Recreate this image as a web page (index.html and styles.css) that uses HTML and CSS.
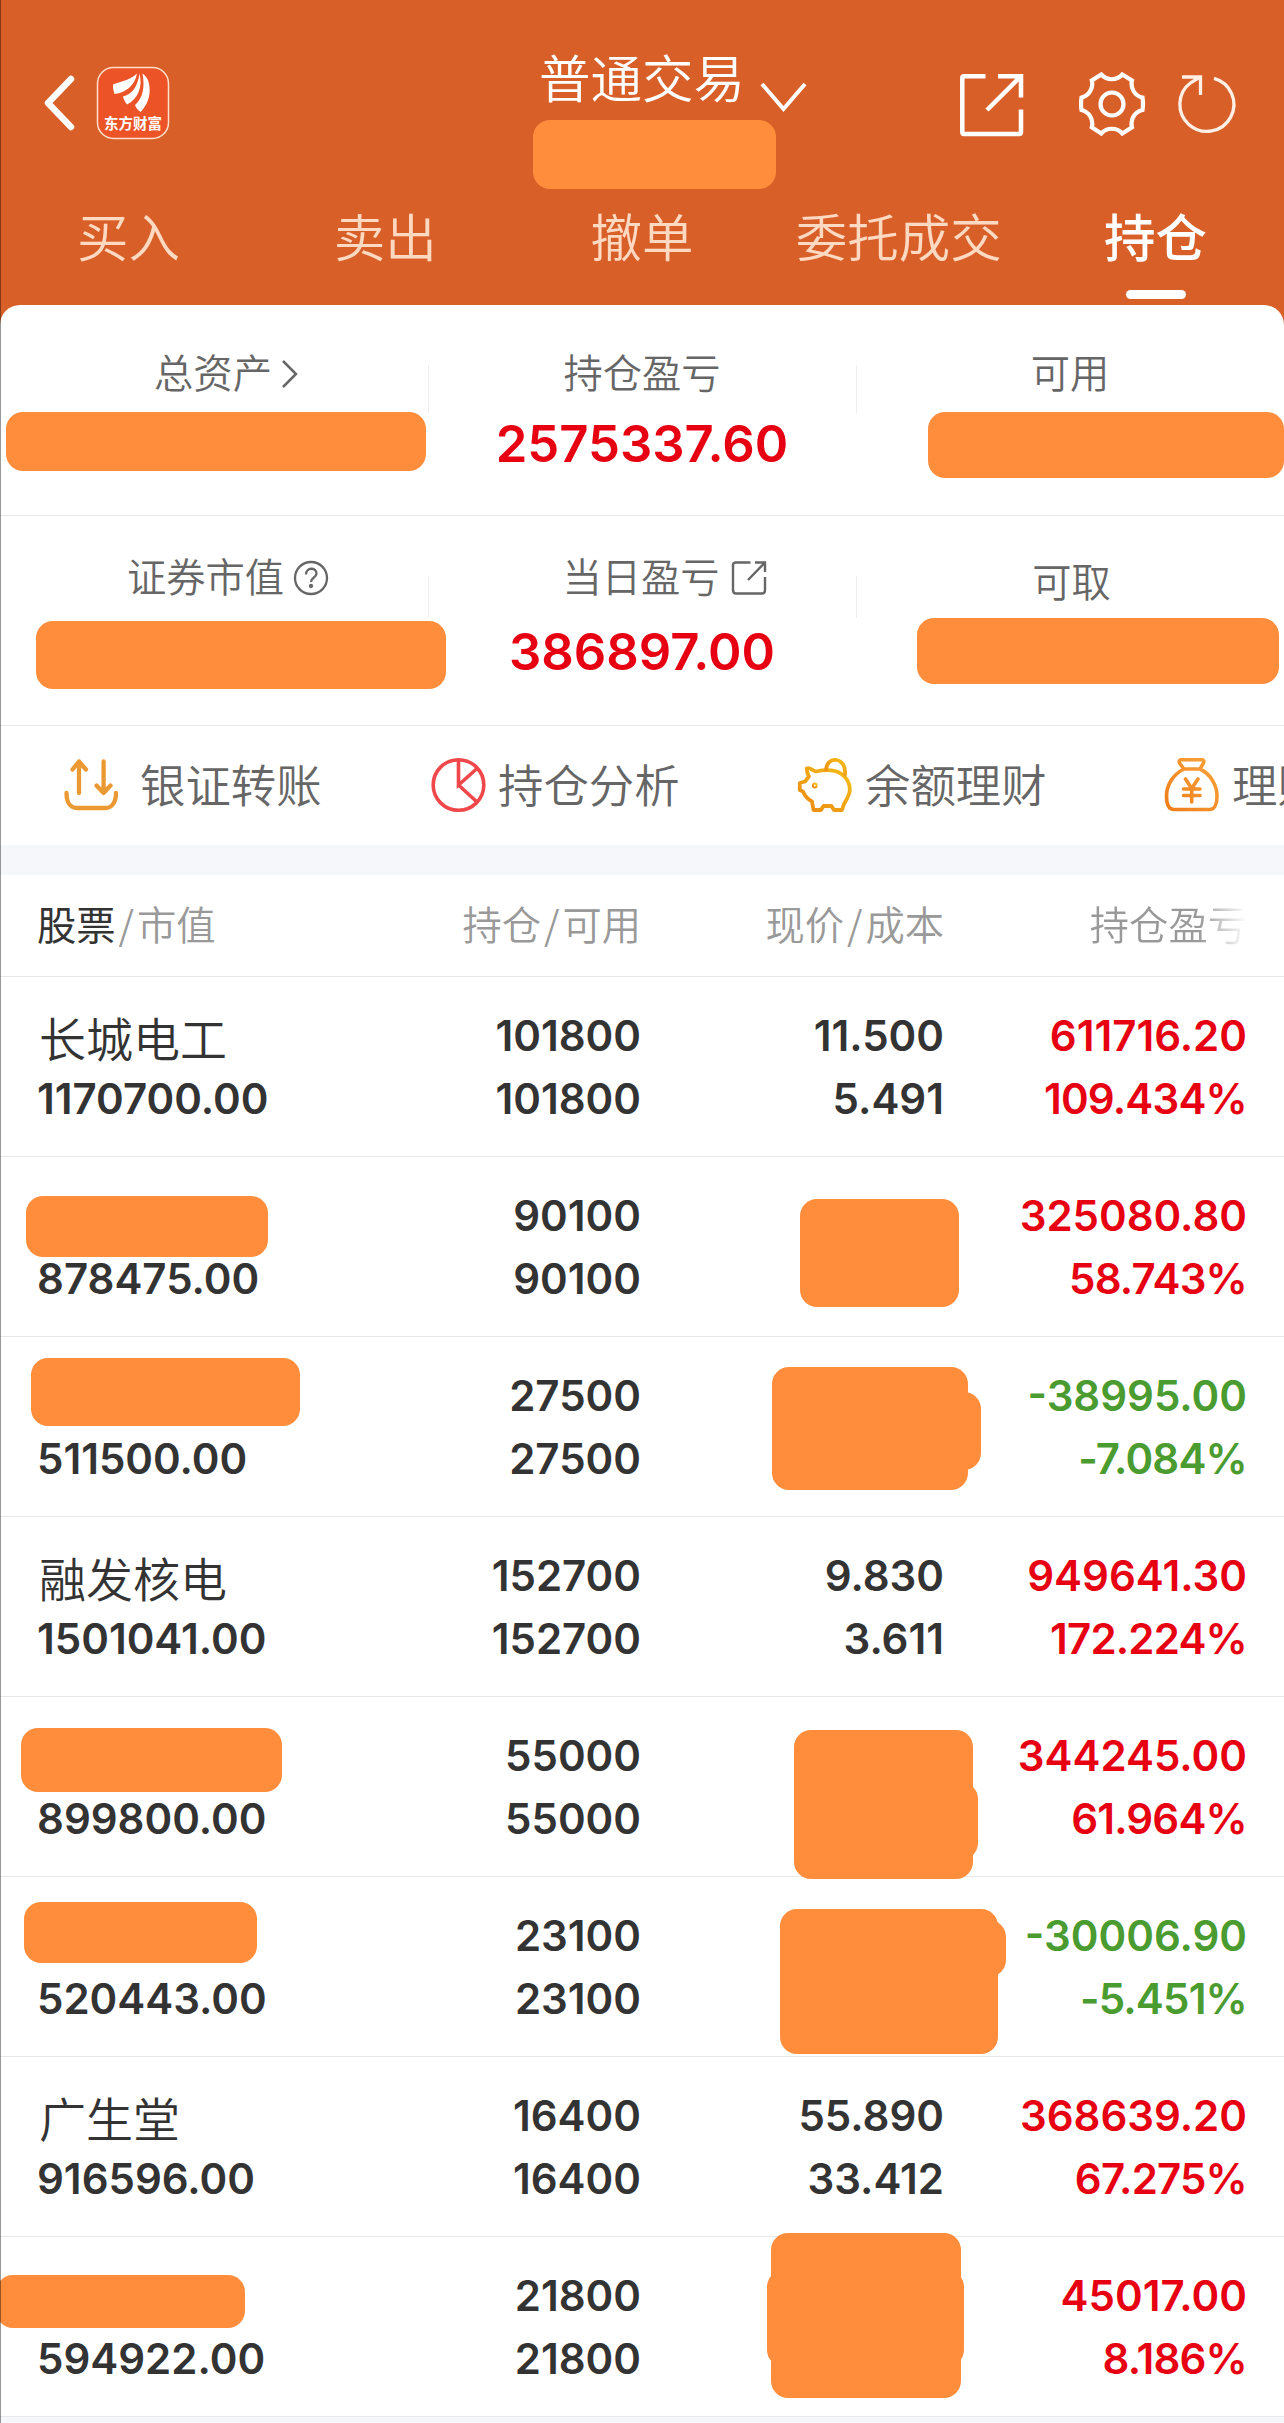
FILE: index.html
```html
<!DOCTYPE html>
<html lang="zh-CN">
<head>
    <meta charset="UTF-8">
    <title>持仓</title>
    <link rel="stylesheet" href="styles.css">
</head>
<body>
    <header class="header">
        <div class="topbar">
            <div class="left">
                <svg class="back" width="32" height="56" viewBox="0 0 32 56"><path d="M28 4L5 28L28 52" fill="none" stroke="#fff" stroke-width="6.5" stroke-linecap="round" stroke-linejoin="round"/></svg>
                <svg class="logo" width="74" height="74" viewBox="-1 -1 74 74">
                    <rect x="0.5" y="0.5" width="71" height="71" rx="16" fill="#ec5427" stroke="#ffe0cc" stroke-width="1.5"/>
                    <g fill="#fff">
                        <path d="M16 17.500Q15.500 22 17.500 27C29 26 38 18 40 6.500C33 13 25 14 16 17.500Z"/>
                        <path d="M26 29.500C26.500 32 28 35 30 37.500C41 32 46 20 42.500 6.500C41 18 36 27 26 29.500Z"/>
                        <path d="M38 38C38.500 40 41 43.500 43.700 45C50 38 53.500 30 52.500 20C52 13 49 9 45.500 6.500C48 20 46 31 38 38Z"/>
                    </g>
                    <text class="logo-text" x="36" y="62">东方财富</text>
                </svg>
            </div>
            <div class="middle">
                <div class="title">普通交易
                    <svg width="48" height="32" viewBox="0 0 48 32"><path d="M2 3L23.500 28L45 3" fill="none" stroke="#fff" stroke-width="4"/></svg>
                </div>
                <div class="mask account"></div>
            </div>
            <div class="right">
                <svg width="66" height="66" viewBox="0 0 66 66" fill="none" stroke="#fff" stroke-width="4.500"><path d="M26.500 4.300H5Q3.300 4.300 3.300 6V60Q3.300 62 5 62H60Q62 62 62 60V37.500M39 4.300H62V25.500M60 6L28 38"/></svg>
                <svg class="gear" width="68" height="66" viewBox="0 0 68 66" fill="none" stroke="#fff" stroke-width="4.200"><path d="M22.300 2.500A14 14 0 0 0 43.300 2.500L53 8.500A14 14 0 0 0 63.500 25.600Q64.500 32 63.500 38A14 14 0 0 0 53 55.300L43.300 61.500A14 14 0 0 0 22.300 61.500L12.800 55.300A14 14 0 0 0 2.500 38Q1.500 32 2.500 25.600A14 14 0 0 0 12.800 8.500Z"/><circle cx="33" cy="32" r="11.500"/></svg>
                <svg class="refresh" width="62" height="62" viewBox="0 0 62 62" fill="none" stroke="#ffefe4" stroke-width="3.300"><path d="M37 4.300A27 27 0 1 1 14 8.500L23 3M5 3H23.500V21"/></svg>
            </div>
        </div>
        <nav class="tabs">
            <span>买入</span>
            <span>卖出</span>
            <span>撤单</span>
            <span>委托成交</span>
            <span class="active">持仓</span>
        </nav>
    </header>

    <section class="summary">
        <div class="row">
            <div class="cell">
                <p class="label">总资产<svg class="more" width="18" height="30" viewBox="0 0 18 30"><path d="M2 2L15 15L2 28" fill="none" stroke="#666" stroke-width="2.500"/></svg></p>
                <div class="mask total"></div>
            </div>
            <div class="cell">
                <p class="label">持仓盈亏</p>
                <p class="value">2575337.60</p>
            </div>
            <div class="cell">
                <p class="label">可用</p>
                <div class="mask usable"></div>
            </div>
        </div>
        <div class="row second">
            <div class="cell">
                <p class="label">证券市值<svg class="help" width="36" height="36" viewBox="0 0 36 36" fill="none" stroke="#666" stroke-width="2.300"><circle cx="18" cy="18" r="16"/><path d="M13 14.500C13 7 23.500 7 23.500 13.500C23.500 17.500 18 17.500 18 22"/><circle cx="18" cy="26" r="1" /></svg></p>
                <div class="mask market"></div>
            </div>
            <div class="cell">
                <p class="label">当日盈亏<svg class="open" width="36" height="36" viewBox="0 0 36 36" fill="none" stroke="#666" stroke-width="2.400"><path d="M19.500 2.500H5Q2 2.500 2 5.500V30Q2 33.500 5 33.500H31Q34 33.500 34 30V17M24 2.500H34V12M34 2.500L17 20"/></svg></p>
                <p class="value">386897.00</p>
            </div>
            <div class="cell">
                <p class="label low">可取</p>
                <div class="mask cash"></div>
            </div>
        </div>
    </section>

    <section class="shortcuts">
        <div class="item first">
            <svg width="58" height="58" viewBox="0 0 58 58" fill="none" stroke="#eb9a33" stroke-width="4.300" stroke-linecap="round" stroke-linejoin="round"><path d="M17 37V5.500M10.500 13.500L17 5.500L24 13.500M41.600 5.500V37M34.500 29.500L41.600 37L48.500 29.500M4.500 37C4.500 46 8 52 15 52H43.500C50 52 54 46 54 37"/></svg>
            <span>银证转账</span>
        </div>
        <div class="item">
            <svg width="58" height="58" viewBox="0 0 58 58" fill="none" stroke="#f0484a" stroke-width="3.600"><circle cx="29.500" cy="29" r="25.300"/><path d="M29.500 4V29L48 12.500M29.500 29L48 46"/></svg>
            <span>持仓分析</span>
        </div>
        <div class="item">
            <svg width="58" height="58" viewBox="0 0 58 58" fill="none" stroke="url(#gold)" stroke-width="3.800" stroke-linecap="round" stroke-linejoin="round">
                <defs><linearGradient id="gold" x1="0" y1="1" x2="1" y2="0"><stop offset="0" stop-color="#ec8a12"/><stop offset="1" stop-color="#f5bd17"/></linearGradient></defs>
                <path d="M10.800 12.500C14 11 17 15 20 15.500C27 14 38 13 45.500 18C51 22 54 27 53.800 34C53.500 40 50 44 48 48L46 54H38L35.500 50H27.500L25 54H17.500L16 45.500C11 43 8.500 39 7 35.500L3.800 34V27L9 25.500L13 20.500Q10.500 16 10.800 12.500Z"/>
                <path d="M30 13.500C31 -1 51 1 49 18.500"/>
                <circle cx="18.800" cy="29.500" r="1"/>
            </svg>
            <span>余额理财</span>
        </div>
        <div class="item">
            <svg width="58" height="58" viewBox="0 0 58 58" fill="none" stroke="url(#orange)" stroke-width="3.600" stroke-linecap="round" stroke-linejoin="round">
                <defs><linearGradient id="orange" x1="0" y1="1" x2="1" y2="0"><stop offset="0" stop-color="#f07d18"/><stop offset="1" stop-color="#f8a33c"/></linearGradient></defs>
                <path d="M18 3.800H39.500Q41.500 4 40.500 7L37 13H21L16.500 7Q15.500 4 18 3.800ZM21 13C9 19 3.500 30 3.500 40C3.500 47 5.500 53.500 11 53.500H47C52 53.500 54 47 54 40C54 30 48 18 37 13M22.500 23L28.700 32.500L35 23M28.700 32.500V46M20.500 33H37M20.500 39.500H37"/>
            </svg>
            <span>理财</span>
        </div>
    </section>

    <section class="stocks">
        <div class="stock head">
            <div><b>股票</b><i>/</i>市值</div>
            <div>持仓<i>/</i>可用</div>
            <div>现价<i>/</i>成本</div>
            <div class="fade">持仓盈亏</div>
        </div>
        <div class="stock">
            <div><span class="name">长城电工</span>1170700.00</div>
            <div>101800<br>101800</div>
            <div>11.500<br>5.491</div>
            <div class="up">611716.20<span class="rate">109.434%</span></div>
        </div>
        <div class="stock">
            <div><span class="name"></span>878475.00</div>
            <div>90100<br>90100</div>
            <div></div>
            <div class="up">325080.80<span class="rate">58.743%</span></div>
            <div class="mask name-2"></div>
            <div class="mask price-2"></div>
        </div>
        <div class="stock">
            <div><span class="name"></span>511500.00</div>
            <div>27500<br>27500</div>
            <div></div>
            <div class="down">-38995.00<span class="rate">-7.084%</span></div>
            <div class="mask name-3"></div>
            <div class="mask price-3"></div>
            <div class="mask extra-3"></div>
        </div>
        <div class="stock">
            <div><span class="name">融发核电</span>1501041.00</div>
            <div>152700<br>152700</div>
            <div>9.830<br>3.611</div>
            <div class="up">949641.30<span class="rate">172.224%</span></div>
        </div>
        <div class="stock">
            <div><span class="name"></span>899800.00</div>
            <div>55000<br>55000</div>
            <div></div>
            <div class="up">344245.00<span class="rate">61.964%</span></div>
            <div class="mask name-5"></div>
            <div class="mask price-5"></div>
            <div class="mask extra-5"></div>
        </div>
        <div class="stock">
            <div><span class="name"></span>520443.00</div>
            <div>23100<br>23100</div>
            <div></div>
            <div class="down">-30006.90<span class="rate">-5.451%</span></div>
            <div class="mask name-6"></div>
            <div class="mask price-6"></div>
            <div class="mask extra-6"></div>
        </div>
        <div class="stock">
            <div><span class="name">广生堂</span>916596.00</div>
            <div>16400<br>16400</div>
            <div>55.890<br>33.412</div>
            <div class="up">368639.20<span class="rate">67.275%</span></div>
        </div>
        <div class="stock">
            <div><span class="name"></span>594922.00</div>
            <div>21800<br>21800</div>
            <div></div>
            <div class="up">45017.00<span class="rate">8.186%</span></div>
            <div class="mask name-8"></div>
            <div class="mask price-8"></div>
            <div class="mask extra-8"></div>
        </div>
    </section>
</body>
</html>
```
FILE: styles.css
```css
*{
    box-sizing: border-box;
}
body{
    margin: 0;
    position: relative;
    width: 1284px;
    height: 2423px;
    overflow: hidden;
    background-color: #f5f7fa;
    color: #333;
    font-family: Inter, "Noto Sans CJK SC", sans-serif;
}
/* thin edge down the left side */
body::after{
    content: "";
    position: absolute;
    left: 0;
    top: 0;
    width: 1px;
    height: 100%;
    background-color: rgba(0, 0, 0, 0.4);
    z-index: 5;
}
p{
    margin: 0;
}
svg{
    display: block;
    flex: none;
}
.mask{
    background-color: #ff8d3b;
    border-radius: 17px;
}

/* header */
.header{
    height: 330px;
    background-color: #d85f28;
    color: #fff;
    font-family: "Noto Sans CJK SC", sans-serif;
    font-weight: 350;
}
.topbar{
    display: grid;
    grid-template-columns: 533px 1fr 325px;
    height: 199px;
}
.left{
    display: flex;
    align-items: flex-start;
    padding: 66px 0 0 43px;
}
.back{
    margin: 9px 21px 0 0;
}
.logo-text{
    fill: #fff;
    font-size: 14.5px;
    font-weight: 700;
    text-anchor: middle;
}
.title{
    display: flex;
    height: 60px;
    margin: 46px 0 14px 6px;
    font-size: 51.5px;
    line-height: 60px;
}
.title svg{
    margin: 35px 0 0 15px;
}
.account{
    width: 243px;
    height: 69px;
}
.right{
    display: flex;
    align-items: flex-start;
    padding-top: 72px;
}
.gear{
    margin-left: 54px;
}
.refresh{
    margin: 2px 0 0 30px;
}
.tabs{
    display: grid;
    grid-template-columns: repeat(5, 1fr);
    height: 106px;
    text-align: center;
    font-size: 51.5px;
    line-height: 72px;
    color: #ffd9c2;
}
.tabs .active{
    color: #fff;
    font-weight: 500;
}
.tabs .active::after{
    content: "";
    display: block;
    width: 60px;
    height: 9px;
    margin: 19px auto 0;
    border-radius: 5px;
    background-color: #fff;
}

/* summary */
.summary{
    position: relative;
    margin-top: -25px;
    border-radius: 20px 20px 0 0;
    background-color: #fff;
}
.row{
    display: grid;
    grid-template-columns: repeat(3, minmax(0, 1fr));
    height: 211px;
    border-bottom: 1px solid #e8e8e8;
}
.second{
    height: 210px;
}
.cell{
    position: relative;
    padding-top: 36px;
}
.cell + .cell::before{
    content: "";
    position: absolute;
    left: 0;
    top: 60px;
    width: 1px;
    height: 48px;
    background-color: #eee;
}
.label{
    display: flex;
    justify-content: center;
    align-items: center;
    height: 60px;
    margin-bottom: 6px;
    color: #666;
    font-family: "Noto Sans CJK SC", sans-serif;
    font-size: 39.3px;
    font-weight: 350;
    line-height: 56px;
}
/* icons hang off the end of the label */
.more{
    margin: 6px -25px 0 9px;
}
.help{
    margin: 5px -28px 0 9px;
}
.open{
    margin: 5px -45px 0 11px;
}
.low{
    padding: 9px 0 0 3px;
}
.value{
    margin-top: 13px;
    color: #e60012;
    font-size: 50.8px;
    line-height: 60px;
    font-weight: 560;
    text-align: center;
}
.total{
    width: 420px;
    height: 59px;
    margin: 11px 0 0 6px;
}
.usable{
    width: 356px;
    height: 66px;
    margin: 11px 0 0 72px;
}
.second .cell{
    padding-top: 29px;
}
.second .cell + .cell::before{
    height: 42px;
}
.second .value{
    margin-top: 17px;
}
.market{
    position: relative;
    z-index: 1;
    width: 410px;
    height: 68px;
    margin: 16px 0 0 36px;
}
.cash{
    width: 362px;
    height: 66px;
    margin: 13px 0 0 61px;
}

/* shortcuts */
.shortcuts{
    display: flex;
    height: 119px;
    overflow: hidden;
    background-color: #fff;
}
.item{
    display: flex;
    flex: none;
    width: 367px;
    padding-left: 62px;
    padding-top: 30px;
    gap: 11px;
    color: #666;
    font-family: "Noto Sans CJK SC", sans-serif;
    font-size: 45.4px;
    font-weight: 350;
    line-height: 54px;
    white-space: nowrap;
}
.first span{
    margin-left: 9px;
}

/* stock list */
.stocks{
    margin-top: 30px;
}
.stock{
    position: relative;
    display: grid;
    grid-template-columns: 404px 200px 303px 303px;
    height: 180px;
    padding: 27px 36px 0 37px;
    border-bottom: 1px solid #e8e8e8;
    background-color: #fff;
    font-size: 42px;
    font-weight: 560;
    line-height: 63px;
    text-align: right;
}
.stock > div:first-child{
    text-align: left;
}
.head{
    height: 102px;
    padding-top: 16px;
    color: #999;
    font-family: "Noto Sans CJK SC", sans-serif;
    font-size: 39.3px;
    font-weight: 350;
}
.head b{
    color: #333;
    font-weight: 400;
}
.head i{
    margin: 0 3px;
    font-style: normal;
}
.fade{
    color: transparent;
    background: linear-gradient(90deg, #999 84%, #fff 100%);
    -webkit-background-clip: text;
    background-clip: text;
}
.name{
    display: block;
    height: 63px;
    padding: 4px 0 0 2px;
    font-size: 47px;
    font-weight: 350;
}
.rate{
    display: block;
    letter-spacing: -0.8px;
}
.up{
    color: #e60012;
}
.down{
    color: #4a9b30;
}

/* patches over private cells */
.stock .mask{
    position: absolute;
    z-index: 2;
}
.name-2{ left: 26px; top: 39px; width: 242px; height: 61px; }
.price-2{ left: 800px; top: 42px; width: 159px; height: 108px; }
.name-3{ left: 31px; top: 21px; width: 269px; height: 68px; }
.price-3{ left: 772px; top: 30px; width: 196px; height: 123px; }
.extra-3{ left: 900px; top: 55px; width: 81px; height: 78px; }
.name-5{ left: 21px; top: 31px; width: 261px; height: 64px; }
.price-5{ left: 794px; top: 33px; width: 179px; height: 149px; }
.extra-5{ left: 900px; top: 85px; width: 78px; height: 78px; }
.name-6{ left: 24px; top: 25px; width: 233px; height: 61px; }
.price-6{ left: 780px; top: 32px; width: 218px; height: 145px; }
.extra-6{ left: 900px; top: 43px; width: 106px; height: 57px; }
.name-8{ left: -4px; top: 38px; width: 249px; height: 53px; }
.price-8{ left: 771px; top: -4px; width: 190px; height: 165px; }
.extra-8{ left: 767px; top: 33px; width: 197px; height: 97px; }
```
